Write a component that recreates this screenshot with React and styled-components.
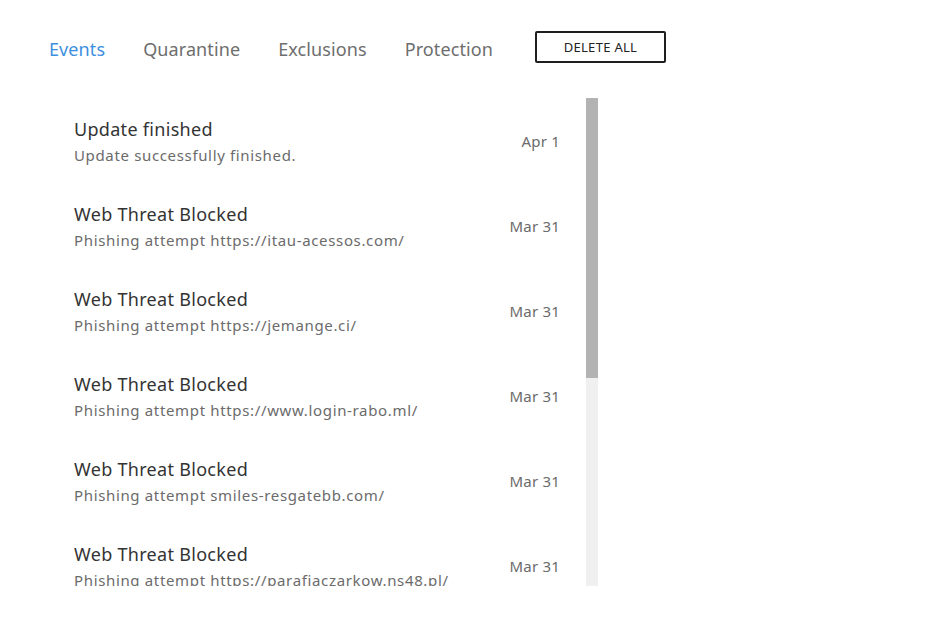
import React from 'react';
import styled, { createGlobalStyle } from 'styled-components';

const GlobalStyle = createGlobalStyle`
  html, body {
    margin: 0;
    padding: 0;
    background: #fff;
  }
  body {
    font-family: "Noto Sans", "Open Sans", sans-serif;
    color: #333;
  }
`;

const events = [
  { title: 'Update finished', text: 'Update successfully finished.', date: 'Apr 1' },
  { title: 'Web Threat Blocked', text: 'Phishing attempt https://itau-acessos.com/', date: 'Mar 31' },
  { title: 'Web Threat Blocked', text: 'Phishing attempt https://jemange.ci/', date: 'Mar 31' },
  { title: 'Web Threat Blocked', text: 'Phishing attempt https://www.login-rabo.ml/', date: 'Mar 31' },
  { title: 'Web Threat Blocked', text: 'Phishing attempt smiles-resgatebb.com/', date: 'Mar 31' },
  { title: 'Web Threat Blocked', text: 'Phishing attempt https://parafiaczarkow.ns48.pl/', date: 'Mar 31' },
  { title: 'Web Threat Blocked', text: 'Phishing attempt https://bradesco-cartoes.net/', date: 'Mar 30' },
  { title: 'Web Threat Blocked', text: 'Phishing attempt https://secure-login.tk/', date: 'Mar 30' },
  { title: 'Update finished', text: 'Update successfully finished.', date: 'Mar 30' },
  { title: 'Web Threat Blocked', text: 'Phishing attempt https://caixa-acesso.ga/', date: 'Mar 29' },
];

const tabs = ['Events', 'Quarantine', 'Exclusions', 'Protection'];

const ROW_HEIGHT = 85;
const VIEW_HEIGHT = 488;

const App = () => {
  const contentHeight = events.length * ROW_HEIGHT;
  const thumbHeight = Math.round((VIEW_HEIGHT / contentHeight) * VIEW_HEIGHT);

  return (
    <Page>
      <GlobalStyle />
      <Toolbar>
        <Tabs>
          {tabs.map((tab, i) => (
            <Tab key={tab} $active={i === 0}>{tab}</Tab>
          ))}
        </Tabs>
        <DeleteButton>DELETE ALL</DeleteButton>
      </Toolbar>
      <ListFrame>
        <Viewport>
          {events.map((ev, i) => (
            <Row key={i}>
              <Info>
                <Title>{ev.title}</Title>
                <Description>{ev.text}</Description>
              </Info>
              <DateLabel>{ev.date}</DateLabel>
            </Row>
          ))}
        </Viewport>
        <ScrollTrack>
          <ScrollThumb style={{ height: thumbHeight }} />
        </ScrollTrack>
      </ListFrame>
    </Page>
  );
};

const Page = styled.div`
  width: 942px;
  height: 626px;
  padding: 31px 0 0 49px;
  box-sizing: border-box;
`;

const Toolbar = styled.div`
  display: flex;
  align-items: center;
  height: 32px;
`;

const Tabs = styled.div`
  display: flex;
  gap: 38px;
  padding-top: 3px;
`;

const Tab = styled.span`
  font-size: 18px;
  letter-spacing: 0.1px;
  color: ${(p) => (p.$active ? '#3d8fe0' : '#6e6e6e')};
  cursor: pointer;
`;

const DeleteButton = styled.button`
  margin-left: 42px;
  width: 131px;
  height: 32px;
  border: 2px solid #1f1f1f;
  border-radius: 2px;
  background: #fff;
  font-family: "Noto Sans", sans-serif;
  font-size: 13px;
  letter-spacing: 0.3px;
  color: #222;
  padding: 0;
  cursor: pointer;
`;

const ListFrame = styled.div`
  display: flex;
  margin-top: 35px;
  margin-left: 11px;
  width: 538px;
  height: ${VIEW_HEIGHT}px;
`;

const Viewport = styled.div`
  flex: 1;
  overflow: hidden;
`;

const ScrollTrack = styled.div`
  width: 12px;
  background: #f0f0f0;
`;

const ScrollThumb = styled.div`
  width: 100%;
  background: #b3b3b3;
`;

const Row = styled.div`
  display: flex;
  align-items: center;
  justify-content: space-between;
  height: ${ROW_HEIGHT}px;
  padding: 1px 26px 0 14px;
  box-sizing: border-box;
`;

const Info = styled.div`
  display: flex;
  flex-direction: column;
  gap: 4px;
`;

const Title = styled.div`
  font-size: 18px;
  letter-spacing: 0.3px;
  color: #333;
`;

const Description = styled.div`
  font-size: 15px;
  letter-spacing: 0.65px;
  color: #6b6b6b;
  white-space: nowrap;
`;

const DateLabel = styled.div`
  font-size: 15px;
  letter-spacing: 0.2px;
  color: #6b6b6b;
`;

export default App;
